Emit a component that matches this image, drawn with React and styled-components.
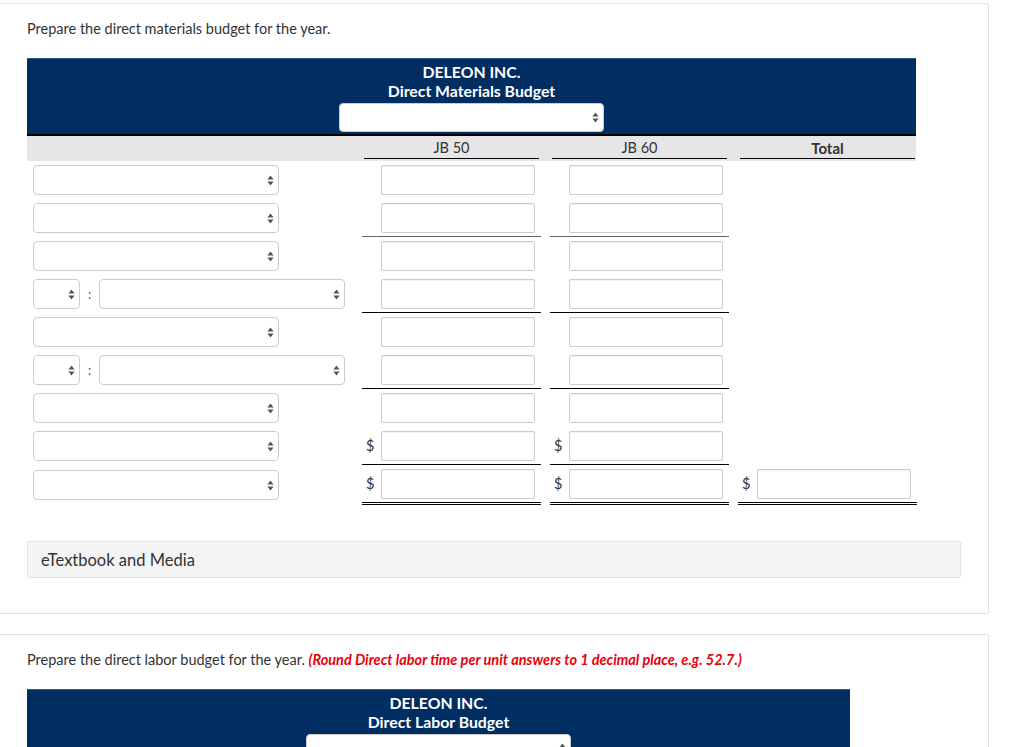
import React from "react";
import styled, { createGlobalStyle } from "styled-components";

const GlobalStyle = createGlobalStyle`
  html, body { margin: 0; padding: 0; background: #fff; }
  body {
    font-family: "Lato", "Open Sans", "Liberation Sans", sans-serif;
    font-size: 14.5px;
    color: #333;
    overflow: hidden;
  }
  * { box-sizing: border-box; }
`;

const Page = styled.div`
  padding-top: 3px;
  margin-left: -1px;
  width: 990px;
  display: flex;
  flex-direction: column;
  gap: 20px;
`;

const Card = styled.section`
  border: 1px solid #e0e0e0;
  border-radius: 2px;
  padding: 15px 27px 35px 27px;
`;

const Prompt = styled.p`
  margin: 0 0 19px;
  font-size: 14.5px;
  line-height: 20px;
  color: #333;
`;

const Hint = styled.span`
  color: #e8000b;
  font-weight: 700;
  font-style: italic;
`;

const Sheet = styled.div`
  display: grid;
  grid-template-columns: 331px 188px 188px 182px;
  width: 889px;
`;

const TitleBar = styled.div`
  grid-column: 1 / -1;
  width: ${(p) => p.$width || 889}px;
  background: #002d62;
  border-top: 1px solid #3a5a86;
  border-bottom: ${(p) => (p.$open ? "none" : "2px solid #000")};
  padding: 3px 0 2px;
  display: flex;
  flex-direction: column;
  align-items: center;
  color: #fff;
  font-weight: 700;
  font-size: 15.8px;
  line-height: 19px;
  text-align: center;
`;

const HeadCell = styled.div`
  background: #e6e6e6;
  padding: 2px 0 0;
  display: flex;
  flex-direction: column;
`;

const HeadLabel = styled.div`
  line-height: 20px;
  text-align: center;
  font-size: ${(p) => (p.$bold ? 15 : 14.5)}px;
  font-weight: ${(p) => (p.$bold ? 700 : 400)};
  color: #333;
  margin: 0 ${(p) => p.$right ?? 7}px 2px 6px;
  border-bottom: ${(p) => (p.$label ? "1px solid transparent" : "1px solid #000")};
`;

const LabelCell = styled.div`
  padding: 4px 0 4px 6px;
  display: flex;
  align-items: center;
`;

const AmountCell = styled.div`
  padding: 4px 0 3px;
  margin: 0 ${(p) => p.$right ?? 5}px 0 4px;
  display: flex;
  align-items: center;
  border-bottom: ${(p) =>
    p.$rule === "double"
      ? "3px double #000"
      : p.$rule === "single"
      ? `1px solid ${p.$soft ? "#666" : "#000"}`
      : "1px solid transparent"};
`;

const Dollar = styled.span`
  width: 19px;
  padding-left: 4px;
  font-size: 14.5px;
  line-height: 30px;
  color: #333;
  flex: none;
`;

const TextInput = styled.input`
  width: 154px;
  height: 30px;
  border: 1px solid #ccc;
  border-radius: 2px;
  box-shadow: inset 0 1px 1px rgba(0, 0, 0, 0.06);
  background: #fff;
  padding: 0 6px;
  font-family: inherit;
  font-size: 14px;
  outline: none;
`;

const SelectBox = styled.div`
  width: ${(p) => p.$width}px;
  height: ${(p) => p.$height || 30}px;
  background: #fff;
  border: 1px solid #ccc;
  border-radius: 4px;
  display: flex;
  align-items: center;
  justify-content: flex-end;
  padding-right: 4px;
  flex: none;
  margin-top: ${(p) => p.$top || 0}px;
`;

const Colon = styled.span`
  width: 19px;
  text-align: center;
  color: #555;
  font-size: 13px;
  line-height: 30px;
`;

const MediaBar = styled.div`
  margin-top: 36px;
  width: 934px;
  height: 37px;
  background: #f4f4f4;
  border: 1px solid #e2e2e2;
  border-radius: 2px;
  padding: 0 13px;
  display: flex;
  align-items: center;
  font-size: 16.5px;
  color: #333;
`;

const Arrows = () => (
  <svg width="7" height="11" viewBox="0 0 7 11" aria-hidden="true">
    <path d="M3.5 0.5L6.6 4.6H0.4Z M3.5 10.5L0.4 6.4H6.6Z" fill="#555" />
  </svg>
);

const Select = ({ width, height, top }) => (
  <SelectBox $width={width} $height={height} $top={top}>
    <Arrows />
  </SelectBox>
);

const rows = [
  { split: false, rule: "none" },
  { split: false, rule: "single", soft: true },
  { split: false, rule: "none" },
  { split: true, rule: "single" },
  { split: false, rule: "none" },
  { split: true, rule: "single" },
  { split: false, rule: "none" },
  { split: false, rule: "single", dollar: true },
  { split: false, rule: "double", dollar: true, total: true },
];

export default function App() {
  return (
    <>
      <GlobalStyle />
      <Page>
        <Card>
          <Prompt>Prepare the direct materials budget for the year.</Prompt>
          <Sheet>
            <TitleBar>
              <div>DELEON INC.</div>
              <div>Direct Materials Budget</div>
              <Select width={265} height={29} top={3} />
            </TitleBar>
            <HeadCell>
              <HeadLabel $label>&nbsp;</HeadLabel>
            </HeadCell>
            <HeadCell>
              <HeadLabel>JB 50</HeadLabel>
            </HeadCell>
            <HeadCell>
              <HeadLabel>JB 60</HeadLabel>
            </HeadCell>
            <HeadCell>
              <HeadLabel $bold $right={1}>Total</HeadLabel>
            </HeadCell>
            {rows.map((r, i) => (
              <React.Fragment key={i}>
                <LabelCell>
                  {r.split ? (
                    <>
                      <Select width={47} />
                      <Colon>:</Colon>
                      <Select width={246} />
                    </>
                  ) : (
                    <Select width={246} />
                  )}
                </LabelCell>
                <AmountCell $rule={r.rule} $soft={r.soft}>
                  <Dollar>{r.dollar ? "$" : ""}</Dollar>
                  <TextInput />
                </AmountCell>
                <AmountCell $rule={r.rule} $soft={r.soft}>
                  <Dollar>{r.dollar ? "$" : ""}</Dollar>
                  <TextInput />
                </AmountCell>
                {r.total ? (
                  <AmountCell $rule={r.rule} $right={-1}>
                    <Dollar>$</Dollar>
                    <TextInput />
                  </AmountCell>
                ) : (
                  <div />
                )}
              </React.Fragment>
            ))}
          </Sheet>
          <MediaBar>eTextbook and Media</MediaBar>
        </Card>
        <Card>
          <Prompt>
            Prepare the direct labor budget for the year.{" "}
            <Hint>
              (Round Direct labor time per unit answers to 1 decimal place, e.g. 52.7.)
            </Hint>
          </Prompt>
          <Sheet>
            <TitleBar $width={823} $open>
              <div>DELEON INC.</div>
              <div>Direct Labor Budget</div>
              <Select width={265} height={29} top={3} />
            </TitleBar>
          </Sheet>
        </Card>
      </Page>
    </>
  );
}
